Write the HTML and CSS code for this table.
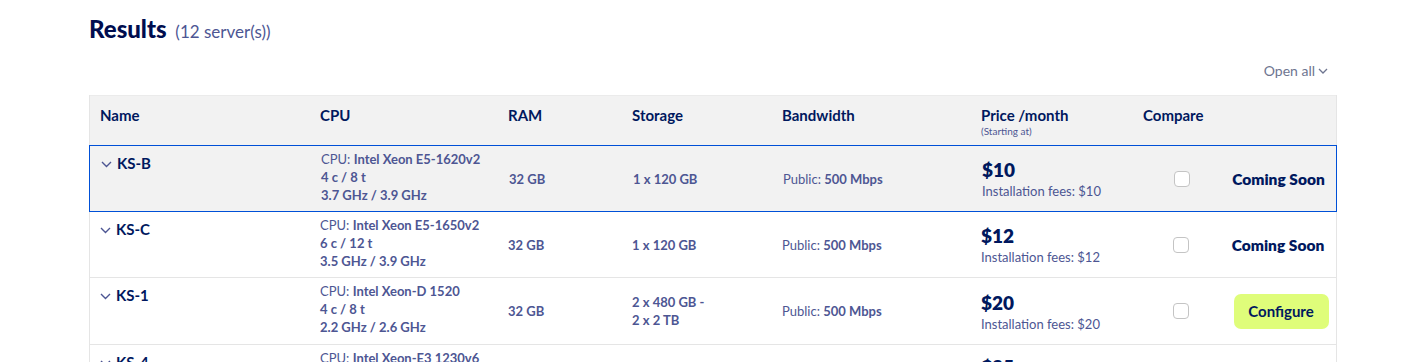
FILE: index.html
```html
<!DOCTYPE html>
<html>
<head>
<meta charset="utf-8">
<link rel="stylesheet" href="styles.css">
</head>
<body>
<div class="page">
  <h2 class="title">Results <span class="count">(12 server(s))</span></h2>
  <div class="toolbar">
    <button class="open-all">Open all
      <svg width="10" height="6" viewBox="0 0 10 6"><path d="M1 1l4 4 4-4" fill="none" stroke="currentColor" stroke-width="1.3"/></svg>
    </button>
  </div>
  <div class="table">
    <div class="row head">
      <div class="c name">Name</div>
      <div class="c">CPU</div>
      <div class="c">RAM</div>
      <div class="c">Storage</div>
      <div class="c">Bandwidth</div>
      <div class="c price-h">Price /month<small>(Starting at)</small></div>
      <div class="c">Compare</div>
      <div class="c"></div>
    </div>

    <div class="row active">
      <div class="c name"><svg class="chev" width="11" height="7" viewBox="0 0 11 7"><path d="M1 1l4.5 4.5L10 1" fill="none" stroke="currentColor" stroke-width="1.4"/></svg>KS-B</div>
      <div class="c cpu"><span class="lbl">CPU: </span><b>Intel Xeon E5-1620v2</b><br><b>4 c / 8 t</b><br><b>3.7 GHz / 3.9 GHz</b></div>
      <div class="c mid val">32 GB</div>
      <div class="c mid val">1 x 120 GB</div>
      <div class="c mid bw"><span class="lbl">Public: </span><b>500 Mbps</b></div>
      <div class="c mid price"><div class="amount">$10</div><div class="fees">Installation fees: $10</div></div>
      <div class="c mid cmp"><span class="box"></span></div>
      <div class="c mid action"><span class="soon">Coming Soon</span></div>
    </div>

    <div class="row short">
      <div class="c name"><svg class="chev" width="11" height="7" viewBox="0 0 11 7"><path d="M1 1l4.5 4.5L10 1" fill="none" stroke="currentColor" stroke-width="1.4"/></svg>KS-C</div>
      <div class="c cpu"><span class="lbl">CPU: </span><b>Intel Xeon E5-1650v2</b><br><b>6 c / 12 t</b><br><b>3.5 GHz / 3.9 GHz</b></div>
      <div class="c mid val">32 GB</div>
      <div class="c mid val">1 x 120 GB</div>
      <div class="c mid bw"><span class="lbl">Public: </span><b>500 Mbps</b></div>
      <div class="c mid price"><div class="amount">$12</div><div class="fees">Installation fees: $12</div></div>
      <div class="c mid cmp"><span class="box"></span></div>
      <div class="c mid action"><span class="soon">Coming Soon</span></div>
    </div>

    <div class="row">
      <div class="c name"><svg class="chev" width="11" height="7" viewBox="0 0 11 7"><path d="M1 1l4.5 4.5L10 1" fill="none" stroke="currentColor" stroke-width="1.4"/></svg>KS-1</div>
      <div class="c cpu"><span class="lbl">CPU: </span><b>Intel Xeon-D 1520</b><br><b>4 c / 8 t</b><br><b>2.2 GHz / 2.6 GHz</b></div>
      <div class="c mid val">32 GB</div>
      <div class="c mid val">2 x 480 GB -<br>2 x 2 TB</div>
      <div class="c mid bw"><span class="lbl">Public: </span><b>500 Mbps</b></div>
      <div class="c mid price"><div class="amount">$20</div><div class="fees">Installation fees: $20</div></div>
      <div class="c mid cmp"><span class="box"></span></div>
      <div class="c mid action"><button class="configure">Configure</button></div>
    </div>

    <div class="row tall">
      <div class="c name"><svg class="chev" width="11" height="7" viewBox="0 0 11 7"><path d="M1 1l4.5 4.5L10 1" fill="none" stroke="currentColor" stroke-width="1.4"/></svg>KS-4</div>
      <div class="c cpu"><span class="lbl">CPU: </span><b>Intel Xeon-E3 1230v6</b><br><b>4 c / 8 t</b><br><b>3.5 GHz / 3.9 GHz</b></div>
      <div class="c mid val">32 GB</div>
      <div class="c mid val">2 x 450 GB</div>
      <div class="c mid bw"><span class="lbl">Public: </span><b>500 Mbps</b></div>
      <div class="c price low"><div class="amount">$25</div><div class="fees">Installation fees: $25</div></div>
      <div class="c mid cmp"><span class="box"></span></div>
      <div class="c mid action"><button class="configure">Configure</button></div>
    </div>
  </div>
</div>
</body>
</html>
```

FILE: styles.css
```css
* { box-sizing: border-box; }
html, body { margin: 0; padding: 0; background: #fff; }
body {
  font-family: Lato, "Open Sans", "Liberation Sans", sans-serif;
  color: #00185e;
  overflow: hidden;
}
.page {
  width: 1248px;
  margin-left: 89px;
  padding-top: 13px;
}
.title {
  margin: 0;
  font-size: 24px;
  font-weight: 900;
  line-height: 32px;
  color: #000d4f;
}
.count {
  font-size: 17px;
  font-weight: 400;
  color: #4d5693;
  margin-left: 3px;
}
.toolbar {
  display: flex;
  justify-content: flex-end;
  padding: 13px 9px 14px 0;
}
.open-all {
  border: 0;
  background: none;
  padding: 0;
  font: inherit;
  font-size: 14px;
  color: #6e7590;
  display: flex;
  align-items: center;
  gap: 3px;
  line-height: 20px;
}
.table {
  border-left: 1px solid #e5e5e5;
  border-right: 1px solid #e5e5e5;
}
.row {
  display: grid;
  grid-template-columns: 220px 188px 124px 150px 199px 162px 83px 1fr;
  padding: 0 0 0 10px;
  border-bottom: 1px solid #e5e5e5;
  min-height: 67px;
}
.row.short { min-height: 66px; }
.row.tall { min-height: 96px; }
.row.head {
  background: #f2f2f2;
  border-top: 1px solid #ebebeb;
  min-height: 50px;
  border-bottom: 0;
  font-size: 15px;
  font-weight: 700;
  color: #00185e;
}
.row.head .c { padding-top: 9px; line-height: 20px; }
.price-h small {
  display: block;
  font-size: 10px;
  font-weight: 400;
  color: #4d5693;
  line-height: 12px;
}
.row.active {
  background: #f2f2f2;
  border: 1px solid #0050d7;
  margin: 0 -1px;
  padding-left: 11px;
}
.c { min-width: 0; }
.name {
  padding-top: 8px;
  font-size: 15px;
  font-weight: 700;
  line-height: 20px;
  display: flex;
  align-items: flex-start;
  gap: 5px;
  color: #00185e;
}
.row:not(.head) .name { padding-top: 7px; }
.chev { color: #4d5693; margin-top: 8px; }
.cpu {
  padding: 4px 0 6px;
  font-size: 13px;
  line-height: 18px;
  color: #4d5693;
}
.cpu b, .bw b { font-weight: 700; }
.mid { display: flex; flex-direction: column; justify-content: center; }
.val {
  font-size: 13px;
  font-weight: 700;
  line-height: 18px;
  color: #4d5693;
}
.bw {
  display: block;
  align-self: center;
  font-size: 13px;
  color: #4d5693;
}
.price { padding-top: 1px; }
.price.low { padding-top: 10px; }
.amount {
  font-size: 19px;
  font-weight: 800;
  line-height: 24px;
  color: #00185e;
}
.fees {
  font-size: 13px;
  line-height: 18px;
  color: #4d5693;
}
.cmp { padding-left: 30px; }
.box {
  width: 16px;
  height: 16px;
  border: 1px solid #c4c4c4;
  border-radius: 4px;
  background: #fff;
  display: block;
}
.action { align-items: center; padding-right: 6px; }
.soon {
  font-size: 15.5px;
  font-weight: 800;
  color: #00185e;
}
.configure {
  border: 0;
  background: #dffd7a;
  border-radius: 7px;
  font: inherit;
  font-size: 15px;
  font-weight: 700;
  color: #00185e;
  width: 95px;
  height: 35px;
  margin-left: 6px;
}
```
